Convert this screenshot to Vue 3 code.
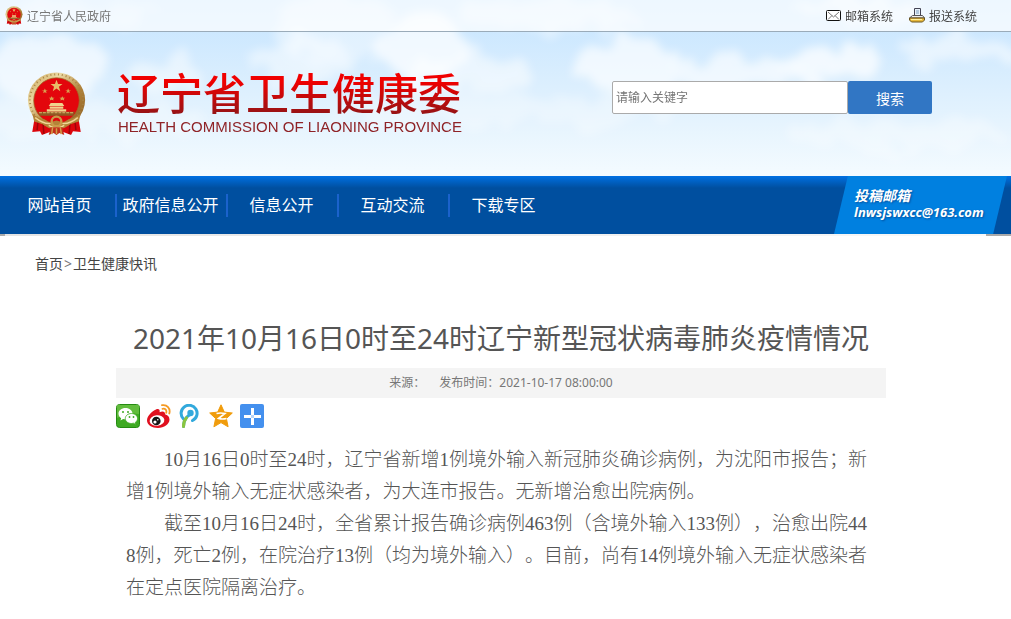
<template>
  <div class="page">
    <header class="header">
      <svg class="sky" viewBox="0 0 1011 176" preserveAspectRatio="none" aria-hidden="true">
        <defs>
          <linearGradient id="skyBase" x1="0" y1="0" x2="0" y2="1">
            <stop offset="0" stop-color="#c4e4ff" />
            <stop offset="0.45" stop-color="#daeefe" />
            <stop offset="0.75" stop-color="#e8f5fe" />
            <stop offset="1" stop-color="#f4fbff" />
          </linearGradient>
          <filter id="cloud" x="-20%" y="-40%" width="140%" height="180%">
            <feTurbulence type="fractalNoise" baseFrequency="0.035" numOctaves="5" seed="7" result="noise" />
            <feDisplacementMap in="SourceGraphic" in2="noise" scale="44" xChannelSelector="R" yChannelSelector="G" />
            <feGaussianBlur stdDeviation="5" />
          </filter>
        </defs>
        <rect width="1011" height="176" fill="url(#skyBase)" />
        <g fill="#fff" filter="url(#cloud)">
          <ellipse v-for="(c, i) in clouds" :key="i" :cx="c[0]" :cy="c[1]" :rx="c[2]" :ry="c[3]" :opacity="c[4]" />
        </g>
      </svg>

      <div class="topbar">
        <a href="#" class="gov">
          <svg class="gov-icon" viewBox="0 0 60 66"><use href="#emblem" /></svg>
          辽宁省人民政府
        </a>
        <div class="systems">
          <a href="#">
            <svg width="15" height="12" viewBox="0 0 15 12">
              <rect x="0.5" y="0.5" width="14" height="10" rx="1" fill="#fff" stroke="#111" />
              <path d="M2 2l5.500 5L13 2M2 9.500l4-4M13 9.500l-4-4" fill="none" stroke="#777" />
            </svg>
            邮箱系统
          </a>
          <a href="#">
            <svg width="16" height="15" viewBox="0 0 16 15">
              <path d="M5.500 8V.5h6V8" fill="#e8f2fb" stroke="#445" />
              <path d="M7 3h3M7 5h3" stroke="#7a9cc0" />
              <path d="M3.500 7.500h10l2 2.500H.5z" fill="#eee" stroke="#555" />
              <path d="M.5 10h15v2l-2 2h-11l-2-2z" fill="#e7b93c" stroke="#6a5520" />
              <path d="M2 11.500h11" stroke="#fff0a0" />
            </svg>
            报送系统
          </a>
        </div>
      </div>

      <div class="banner">
        <div class="brand">
          <svg class="emblem" viewBox="0 0 60 66" role="img" aria-label="国徽">
            <defs>
              <linearGradient id="gold" x1="0" y1="0" x2="1" y2="1">
                <stop offset="0" stop-color="#c59b4c" />
                <stop offset="0.3" stop-color="#ecdba6" />
                <stop offset="0.6" stop-color="#b0823a" />
                <stop offset="1" stop-color="#8c5d22" />
              </linearGradient>
            </defs>
            <g id="emblem">
              <path d="M8 44L5 62l8-1 2 4 8-3h14l8 3 2-4 8 1-3-18z" fill="#dc060c" />
              <path d="M16 52l1 12M44 52l-1 12M11 50l-1 10M49 50l1 10" stroke="#9c0508" stroke-width="1.500" />
              <ellipse cx="30" cy="29" rx="29.500" ry="28.500" fill="url(#gold)" />
              <ellipse cx="30" cy="29" rx="27.500" ry="26.500" fill="none" stroke="#a88343" stroke-width="2" stroke-dasharray="1 3" />
              <circle cx="30" cy="29.500" r="23.500" fill="#e3060c" stroke="#a06a28" stroke-width="0.800" />
              <path d="M30 8l1.600 4.500h4.600l-3.700 2.800 1.400 4.500-3.900-2.700-3.900 2.700 1.400-4.500-3.700-2.800h4.600z" fill="#e8bd68" />
              <path d="M18 17l1 2h2l-2 1 1 2-2-1-2 1 1-2-2-1h2zM42 17l1 2h2l-2 1 1 2-2-1-2 1 1-2-2-1h2zM25 25l1 1.500h2l-1.500 1 .5 2-2-1-2 1 .5-2-1.500-1h2zM36 25l1 1.500h2l-1.500 1 .5 2-2-1-2 1 .5-2-1.500-1h2z" fill="#d9a350" />
              <path d="M24 32h12l2 3H22zM23 35.500h14v2.500H23zM20 38.500h20v2.500H20z" fill="#f0d28c" />
              <path d="M11 41h38l-2 4H13z" fill="#8e5a24" />
              <path d="M12 42h36" stroke="#dcb870" stroke-dasharray="3 1" />
              <path d="M5 43q7 5 13 6l6 4q6-6 12 0l6-4q6-1 13-6l-2 8-9 3q-5 5-14 5t-14-5l-9-3z" fill="#b48338" />
              <path d="M8 47q9 7 16 6M52 47q-9 7-16 6M22 55q8 5 16 0" fill="none" stroke="#f0d795" stroke-width="1.500" />
              <circle cx="30" cy="51" r="5" fill="none" stroke="#c99b4a" stroke-width="2.500" />
              <path d="M24 57l-2 8 5-2 3 2 3-2 5 2-2-8z" fill="#c2301a" />
              <path d="M26 57l-1 7M30 58v6M34 57l1 7" stroke="#d3a04a" stroke-width="1.500" />
            </g>
          </svg>
          <div class="brand-text">
            <h2>辽宁省卫生健康委</h2>
            <p>HEALTH COMMISSION OF LIAONING PROVINCE</p>
          </div>
        </div>
        <form class="search" @submit.prevent>
          <input v-model="keyword" type="text" placeholder="请输入关键字" aria-label="请输入关键字">
          <button type="submit">搜索</button>
        </form>
      </div>
    </header>

    <nav class="nav">
      <ul>
        <li v-for="item in menu" :key="item"><a href="#">{{ item }}</a></li>
      </ul>
      <a class="mailbox" href="mailto:lnwsjswxcc@163.com">
        <span class="mailbox-title">投稿邮箱</span>
        <span>lnwsjswxcc@163.com</span>
      </a>
    </nav>
    <div class="nav-shadow"></div>

    <main>
      <div class="crumbs"><a href="#">首页</a><span>&gt;</span><a href="#">卫生健康快讯</a></div>

      <article class="article">
        <h1>2021年10月16日0时至24时辽宁新型冠状病毒肺炎疫情情况</h1>
        <div class="meta"><span>来源：</span><span>发布时间：2021-10-17 08:00:00</span></div>

        <div class="share">
          <button type="button" aria-label="微信">
            <svg viewBox="0 0 24 24">
              <rect x="0.5" y="0.5" width="23" height="23" rx="3" fill="#3eaa22" stroke="#258b12" />
              <path d="M1 1h22v9Q12 8 1 14z" fill="#62bd3d" />
              <path d="M9.500 4C5.400 4 2.500 6.500 2.500 9.700c0 1.900 1 3.400 2.600 4.500L4.500 16.500l2.700-1.400c.8.200 1.500.3 2.300.3 4 0 7-2.600 7-5.700S13.500 4 9.500 4z" fill="#fff" />
              <path d="M15.500 9.500c-3.600 0-6.200 2.200-6.200 5s2.600 5 6.200 5c.7 0 1.400-.1 2-.3l2.300 1.300-.6-2c1.500-1 2.300-2.400 2.300-4 0-2.800-2.600-5-6-5z" fill="#fff" stroke="#3eaa22" stroke-width="0.8" />
              <g fill="#3eaa22"><circle cx="7" cy="8" r="1" /><circle cx="12" cy="8" r="1" /><circle cx="13.500" cy="13" r="0.900" /><circle cx="17.500" cy="13" r="0.900" /></g>
            </svg>
          </button>
          <button type="button" aria-label="新浪微博">
            <svg viewBox="0 0 24 24">
              <path d="M9 5.500c2.500-1 4.200 0 3.600 2.700 2.800-1.200 5.900-.8 5.400 2.100 2.500.8 4.500 2.400 4.500 5.200 0 4.800-5.500 8.500-11.500 8.500S0 21 0 16.500C0 12 5 7 9 5.500z" fill="#e0101f" />
              <ellipse cx="10" cy="16.500" rx="7.400" ry="5.200" fill="#fff" transform="rotate(-8 10 16.500)" />
              <circle cx="9.300" cy="17" r="4.300" fill="#151515" />
              <circle cx="8" cy="18" r="1.600" fill="#fff" />
              <circle cx="10.800" cy="15.800" r="0.800" fill="#fff" />
              <path d="M15 1.200c4.900-1 8.800 3.200 7.300 8.300M15.500 4.800c2.900-.6 4.500 1.500 3.700 4" fill="none" stroke="#f59a23" stroke-width="1.800" stroke-linecap="round" />
            </svg>
          </button>
          <button type="button" aria-label="腾讯微博">
            <svg viewBox="0 0 24 24">
              <path d="M5.500 15A8 8 0 1 1 14.500 16.500" fill="none" stroke="#32a9dc" stroke-width="3" stroke-linecap="round" />
              <circle cx="12.500" cy="9" r="3.200" fill="#32a9dc" />
              <path d="M12 10.500C8 13 5.500 17 5.500 22.500" fill="none" stroke="#32a9dc" stroke-width="3" stroke-linecap="round" />
              <path d="M8.500 13.800C6.500 16 5.500 19 5.500 22.500" fill="none" stroke="#8bc53f" stroke-width="3" stroke-linecap="round" />
            </svg>
          </button>
          <button type="button" aria-label="QQ空间">
            <svg viewBox="0 0 24 24">
              <path d="M12 .8l3.300 7.300 8 .9-5.900 5.500 1.700 8.300-7.100-4.200-7.100 4.200 1.700-8.300L.7 9l8-.9z" fill="#f09c0c" stroke="#f09c0c" stroke-linejoin="round" />
              <path d="M7.500 9.500q4-1 8.500 0l-6.500 5q4 1 8 0" fill="none" stroke="#fff" stroke-width="1.600" />
            </svg>
          </button>
          <button type="button" aria-label="更多分享">
            <svg viewBox="0 0 24 24">
              <rect width="24" height="24" rx="2" fill="#4490ee" />
              <path d="M12.500 4v7M12.500 14v7M4 12.500h7M14 12.500h7" stroke="#fff" stroke-width="3" />
              <path d="M11 12.500h3M12.500 11v3" stroke="#b9d6fa" stroke-width="3" />
            </svg>
          </button>
        </div>

        <div class="content">
          <p v-for="(text, i) in paragraphs" :key="i">{{ text }}</p>
        </div>
      </article>
    </main>
  </div>
</template>

<script setup>
import { ref } from 'vue'

const keyword = ref('')

const menu = ['网站首页', '政府信息公开', '信息公开', '互动交流', '下载专区']

const paragraphs = [
  '10月16日0时至24时，辽宁省新增1例境外输入新冠肺炎确诊病例，为沈阳市报告；新增1例境外输入无症状感染者，为大连市报告。无新增治愈出院病例。',
  '截至10月16日24时，全省累计报告确诊病例463例（含境外输入133例），治愈出院448例，死亡2例，在院治疗13例（均为境外输入）。目前，尚有14例境外输入无症状感染者在定点医院隔离治疗。'
]

// cx, cy, rx, ry, opacity
const clouds = [
  [45, 70, 58, 36, 0.6],
  [60, 16, 90, 12, 0.3],
  [170, 75, 36, 20, 0.45],
  [300, 62, 50, 24, 0.45],
  [330, 25, 60, 34, 0.4],
  [420, 48, 50, 30, 0.7],
  [470, 76, 70, 18, 0.5],
  [560, 14, 90, 16, 0.4],
  [630, 66, 50, 34, 0.65],
  [735, 72, 60, 16, 0.6],
  [830, 64, 50, 16, 0.7],
  [860, 10, 60, 14, 0.5],
  [960, 48, 60, 14, 0.5],
  [500, 110, 180, 14, 0.3],
  [900, 135, 120, 14, 0.3],
  [90, 120, 120, 18, 0.3]
]
</script>

<style>
body {
  margin: 0;
  background: #fff;
}
</style>

<style scoped>
.page {
  font-family: "Noto Sans", "Noto Sans CJK SC", sans-serif;
  font-size: 12px;
  color: #444;
}

a {
  color: inherit;
  text-decoration: none;
}

h1, h2, p, ul {
  margin: 0;
  padding: 0;
}

.header {
  position: relative;
  overflow: hidden;
}

.sky {
  position: absolute;
  width: 100%;
  height: 100%;
}

.topbar {
  position: relative;
  display: flex;
  justify-content: space-between;
  align-items: center;
  height: 31px;
  padding: 0 34px 0 5px;
  background: rgba(255, 255, 255, 0.7);
  border-bottom: 1px solid #9aabb9;
}

.topbar a {
  display: flex;
  align-items: center;
  gap: 4px;
}

.gov {
  color: #777;
}

.gov-icon {
  width: 18px;
  height: 19px;
}

.systems {
  display: flex;
  gap: 16px;
}

.banner {
  position: relative;
  display: flex;
  justify-content: space-between;
  align-items: flex-start;
  height: 104px;
  padding: 40px 79px 0 27px;
}

.brand {
  display: flex;
  gap: 31px;
}

.emblem {
  width: 59px;
  height: 64px;
}

.brand-text h2 {
  font-family: "Liberation Sans", "Noto Sans CJK SC", sans-serif;
  font-size: 43px;
  line-height: 47px;
  font-weight: 500;
  background: linear-gradient(#f00000 20%, #8f1517 95%);
  background-clip: text;
  color: transparent;
}

.brand-text p {
  padding-left: 1px;
  font-family: "Liberation Sans", sans-serif;
  font-size: 15px;
  line-height: 16px;
  color: #8f2327;
}

.search {
  display: flex;
  width: 320px;
  margin-top: 9px;
}

.search input {
  flex: 1;
  min-width: 0;
  height: 33px;
  box-sizing: border-box;
  padding: 0 3px;
  border: 1px solid #aaa;
  border-radius: 2px;
  font: inherit;
}

.search input::placeholder {
  color: #757575;
}

.search button {
  width: 84px;
  border: 0;
  border-radius: 2px;
  background: #3176c4;
  color: #fff;
  font: inherit;
  font-size: 14px;
  cursor: pointer;
}

.nav {
  display: flex;
  justify-content: space-between;
  height: 58px;
  padding: 0 4px 0 6px;
  background: linear-gradient(#0070e2, #004f9f 12px);
}

.nav ul {
  display: flex;
  align-items: center;
  list-style: none;
}

.nav li {
  width: 107px;
  padding-right: 2px;
  border-right: 2px solid #1b62cc;
  font-size: 16px;
  line-height: 23px;
  text-align: center;
  color: #fff;
}

.nav li:last-child {
  border-color: transparent;
}

.mailbox {
  display: flex;
  flex-direction: column;
  box-sizing: border-box;
  width: 173px;
  padding: 12px 0 0 20px;
  background: #0080e0;
  clip-path: polygon(8% 0, 100% 0, 92% 100%, 0 100%);
  color: #fff;
  font-size: 13px;
  line-height: 16px;
  font-weight: 700;
  font-style: italic;
  text-shadow: 1px 1px 2px #00509f;
}

.mailbox-title {
  font-size: 14px;
}

.nav-shadow {
  height: 2px;
  background: linear-gradient(90deg, #aaa 5px, #e4e4e4 5px, #f8f8f8 calc(100% - 25px), #aaa calc(100% - 25px));
}

.crumbs {
  padding: 18px 35px 0;
  font-size: 14px;
  line-height: 20px;
}

.crumbs span {
  padding: 0 1px;
  color: #777;
}

.article {
  max-width: 770px;
  margin: 40px 125px 0 116px;
}

.article h1 {
  font-size: 28px;
  line-height: 48px;
  font-weight: 400;
  text-align: center;
  white-space: nowrap;
  color: #555;
}

.meta {
  display: flex;
  justify-content: center;
  gap: 14px;
  margin-top: 6px;
  background: #f4f4f4;
  line-height: 30px;
  color: #777;
}

.share {
  display: flex;
  gap: 7px;
  padding: 6px 0;
}

.share button {
  width: 24px;
  height: 24px;
  padding: 0;
  border: 0;
  background: none;
  cursor: pointer;
}

.share svg {
  display: block;
}

.content {
  padding: 10px;
  font-family: "Liberation Serif", "Noto Sans CJK SC", serif;
  font-size: 19px;
  line-height: 32px;
  font-weight: 300;
  word-break: break-all;
  text-spacing-trim: space-all;
  color: #555;
}

.content p {
  text-indent: 2em;
}
</style>
